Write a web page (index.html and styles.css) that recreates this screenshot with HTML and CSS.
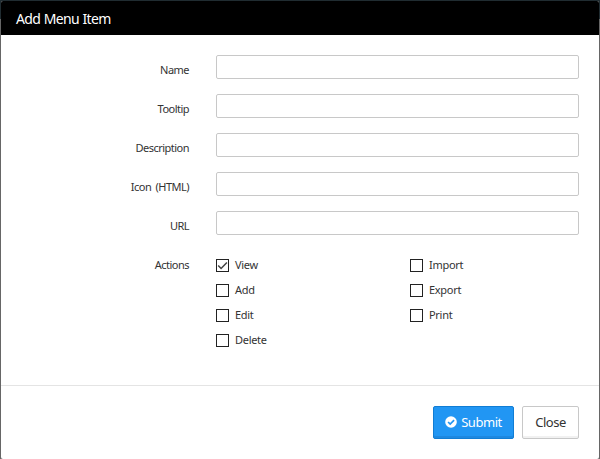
FILE: index.html
```
<!DOCTYPE html>
<html lang="en">
<head>
<meta charset="utf-8">
<title>Add Menu Item</title>
<link rel="stylesheet" href="styles.css">
</head>
<body>
<form class="modal">
  <header class="modal-header"><span>Add Menu Item</span></header>
  <main class="modal-body">
    <div class="row"><label class="label" for="name">Name</label><input class="field" id="name" type="text"></div>
    <div class="row"><label class="label" for="tooltip">Tooltip</label><input class="field" id="tooltip" type="text"></div>
    <div class="row"><label class="label" for="description">Description</label><input class="field" id="description" type="text"></div>
    <div class="row"><label class="label" for="icon">Icon (HTML)</label><input class="field" id="icon" type="text"></div>
    <div class="row"><label class="label" for="url">URL</label><input class="field" id="url" type="text"></div>
    <div class="row actions">
      <span class="label">Actions</span>
      <div class="checks">
        <label class="check"><span class="box"><svg class="tick" viewBox="0 0 11 11"><path d="M1.2 5.4 4.1 8.5 9.9 2.5"/></svg></span><span>View</span></label>
        <label class="check"><span class="box"></span><span>Add</span></label>
        <label class="check"><span class="box"></span><span>Edit</span></label>
        <label class="check"><span class="box"></span><span>Delete</span></label>
        <label class="check"><span class="box"></span><span>Import</span></label>
        <label class="check"><span class="box"></span><span>Export</span></label>
        <label class="check"><span class="box"></span><span>Print</span></label>
      </div>
    </div>
  </main>
  <footer class="modal-footer">
    <button class="btn primary" type="button"><svg class="badge" viewBox="0 0 12 12"><circle cx="6" cy="6" r="5.8"/><path d="M3.1 6 5.2 8.1 9.1 4.2"/></svg><span>Submit</span></button>
    <button class="btn" type="button"><span>Close</span></button>
  </footer>
</form>
</body>
</html>
```
FILE: styles.css
```
* { box-sizing: border-box; }
body {
  margin: 0;
  height: 459px;
  padding: 1px 1px 0;
  overflow: hidden;
  background: linear-gradient(#202c31 0 19px, #666 19px);
  font-family: "Noto Sans", sans-serif;
  font-size: 11px;
  color: #333;
}
.modal {
  display: flex;
  flex-direction: column;
  height: 458px;
  margin: 0;
  background: #fff;
  border-radius: 2px;
  overflow: hidden;
}
.modal-header {
  height: 34px;
  padding-left: 15px;
  background: #000;
  color: #fff;
  font-size: 14px;
  line-height: 35px;
  letter-spacing: -0.65px;
  word-spacing: 0.5px;
}
.modal-body { height: 350px; padding-top: 20px; }
.row {
  display: grid;
  grid-template-columns: 188px 363px;
  column-gap: 27px;
  height: 24px;
  margin-bottom: 15px;
}
.label {
  text-align: right;
  line-height: 30px;
  letter-spacing: -0.52px;
  word-spacing: 2px;
}
.field {
  width: 363px;
  height: 24px;
  border: 1px solid #c8c8c8;
  border-radius: 2px;
  background: #fff;
  padding: 0 6px;
  font: inherit;
}
.actions { height: 100px; margin: 0; }
.checks {
  display: grid;
  grid-template: repeat(4, 25px) / 194px 169px;
  grid-auto-flow: column;
  padding-top: 3px;
}
.check {
  display: flex;
  align-items: center;
  gap: 6px;
  height: 25px;
  line-height: 23px;
  padding-bottom: 1px;
  letter-spacing: -0.3px;
}
.check > span:last-child { padding-bottom: 1px; }
.box {
  width: 13px;
  height: 13px;
  margin-top: 1px;
  border: 1px solid #222;
}
.tick {
  display: block;
  width: 11px;
  height: 11px;
  fill: none;
  stroke: #444;
  stroke-width: 1.5;
}
.modal-footer {
  display: flex;
  justify-content: flex-end;
  gap: 8px;
  height: 74px;
  padding: 20px 20px 0;
  border-top: 1px solid #e4e4e4;
}
.btn {
  display: flex;
  align-items: center;
  justify-content: center;
  width: 57px;
  height: 33px;
  padding: 0 0 1px;
  border: 1px solid #c8c8c8;
  border-radius: 2px;
  background: #fff;
  box-shadow: inset 0 -2px #f1f1f1;
  color: #333;
  font: 13px "Noto Sans", sans-serif;
  letter-spacing: -0.45px;
}
.primary {
  gap: 4px;
  width: 81px;
  background: #2196f3;
  border-color: #117dd4;
  box-shadow: inset 0 -2px #1e88df;
  color: #fff;
}
.badge { width: 12px; height: 12px; fill: #fff; }
.badge path { fill: none; stroke: #2196f3; stroke-width: 1.7; }
```
